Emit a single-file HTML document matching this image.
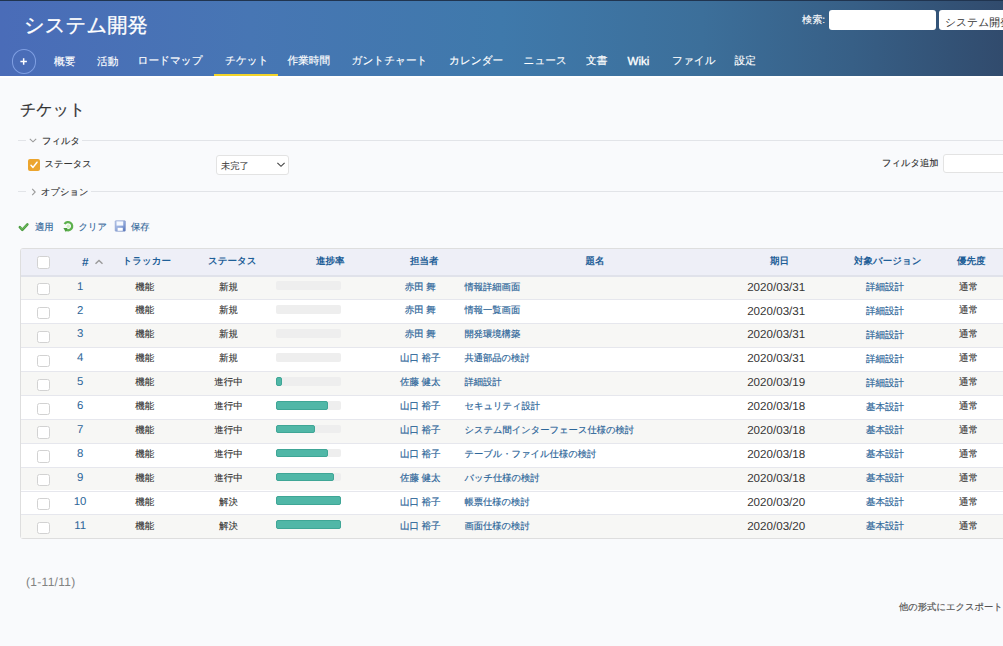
<!DOCTYPE html>
<html><head><meta charset="utf-8">
<style>
*{box-sizing:border-box}
html,body{margin:0;padding:0;width:1003px;height:646px;overflow:hidden;background:#f9fafc;font-family:"Liberation Sans",sans-serif;color:#333;text-rendering:geometricPrecision}
.a{position:absolute;white-space:nowrap;line-height:1}
.c{position:absolute;white-space:nowrap;line-height:1;text-align:center;width:200px}
.b{position:absolute}
</style></head><body>

<div class="b" style="left:0;top:0;width:1003px;height:76px;background:linear-gradient(90deg,#4a6cb8 0%,#4776b4 25%,#3f79ab 50%,#3c6f9a 70%,#375f86 85%,#314b6d 100%)"></div>
<div class="b" style="left:0;top:0;width:1003px;height:1.2px;background:#20344f"></div>
<div class="b" style="left:0;top:76.00px;width:1003px;height:1.5px;background:#fff"></div>
<div class="a" id="title" style="left:24.00px;top:16.00px;font-size:20.33px;color:#fff;letter-spacing:0px;-webkit-text-stroke:0.3px #fff;">システム開発</div>
<div class="a" id="kensaku" style="left:802.00px;top:15.50px;font-size:10.15px;color:#fff;letter-spacing:0px;-webkit-text-stroke:0.1px #fff;">検索:</div>
<div class="b" style="left:829px;top:10px;width:107px;height:20px;background:#fff;border-radius:3px"></div>
<div class="b" style="left:939px;top:10px;width:90px;height:20px;background:#fff;border-radius:3px"></div>
<div class="a" id="seltxt" style="left:945.00px;top:18.00px;font-size:10.80px;color:#333;letter-spacing:0px;-webkit-text-stroke:0px #333;">システム開発</div>
<div class="b" style="left:11.5px;top:48.8px;width:24.6px;height:24.8px;border:1.7px solid #7f9fe2;border-radius:50%"></div>
<svg class="b" style="left:13px;top:51px" width="22" height="22" viewBox="0 0 22 22"><path d="M7.4 10.5 H13.9 M10.65 7.3 V13.8" stroke="#fff" stroke-width="1.5"/></svg>
<div class="a" id="m0" style="left:54.00px;top:57.00px;font-size:10.65px;font-weight:normal;color:#fff;-webkit-text-stroke:0.15px #fff;">概要</div>
<div class="a" id="m1" style="left:97.00px;top:57.00px;font-size:10.65px;font-weight:normal;color:#fff;-webkit-text-stroke:0.15px #fff;">活動</div>
<div class="a" id="m2" style="left:137.50px;top:56.00px;font-size:10.65px;font-weight:normal;color:#fff;-webkit-text-stroke:0.15px #fff;">ロードマップ</div>
<div class="a" id="m3" style="left:225.00px;top:56.00px;font-size:10.65px;font-weight:normal;color:#fff;-webkit-text-stroke:0.15px #fff;">チケット</div>
<div class="a" id="m4" style="left:287.50px;top:56.00px;font-size:10.65px;font-weight:normal;color:#fff;-webkit-text-stroke:0.15px #fff;">作業時間</div>
<div class="a" id="m5" style="left:351.50px;top:56.00px;font-size:10.65px;font-weight:normal;color:#fff;-webkit-text-stroke:0.15px #fff;">ガントチャート</div>
<div class="a" id="m6" style="left:449.00px;top:56.00px;font-size:10.65px;font-weight:normal;color:#fff;-webkit-text-stroke:0.15px #fff;">カレンダー</div>
<div class="a" id="m7" style="left:523.50px;top:56.00px;font-size:10.65px;font-weight:normal;color:#fff;-webkit-text-stroke:0.15px #fff;">ニュース</div>
<div class="a" id="m8" style="left:586.00px;top:56.00px;font-size:10.65px;font-weight:normal;color:#fff;-webkit-text-stroke:0.15px #fff;">文書</div>
<div class="a" id="m9" style="left:627.50px;top:56.00px;font-size:11.60px;font-weight:normal;color:#fff;-webkit-text-stroke:0.35px #fff;">Wiki</div>
<div class="a" id="m10" style="left:672.00px;top:56.00px;font-size:10.65px;font-weight:normal;color:#fff;-webkit-text-stroke:0.15px #fff;">ファイル</div>
<div class="a" id="m11" style="left:734.50px;top:56.00px;font-size:10.65px;font-weight:normal;color:#fff;-webkit-text-stroke:0.15px #fff;">設定</div>
<div class="b" style="left:213.8px;top:73.8px;width:64.7px;height:2.4px;background:#f2d42a"></div>
<div class="a" id="h2" style="left:20.00px;top:103.00px;font-size:15.99px;color:#333;-webkit-text-stroke:0.2px #333;">チケット</div>
<div class="b" style="left:18px;top:140px;width:8px;height:1px;background:#e2e4e8"></div>
<div class="b" style="left:82px;top:140px;width:930px;height:1px;background:#e2e4e8"></div>
<div class="b" style="left:18px;top:191px;width:8px;height:1px;background:#e2e4e8"></div>
<div class="b" style="left:91px;top:191px;width:930px;height:1px;background:#e2e4e8"></div>
<svg class="b" style="left:28px;top:136px" width="10" height="8" viewBox="0 0 10 8"><path d="M1.8 2.8 L5 5.8 L8.2 2.8" fill="none" stroke="#9a9a9a" stroke-width="1.1"/></svg>
<svg class="b" style="left:29px;top:187px" width="10" height="10" viewBox="0 0 10 10"><path d="M3.2 1.8 L6.2 5 L3.2 8.2" fill="none" stroke="#9a9a9a" stroke-width="1.1"/></svg>
<div class="a" id="filt" style="left:42.00px;top:136.50px;font-size:9.30px;color:#333;letter-spacing:0px;-webkit-text-stroke:0.15px #333;">フィルタ</div>
<div class="a" id="opt" style="left:41.00px;top:187.80px;font-size:9.30px;color:#333;letter-spacing:0px;-webkit-text-stroke:0.15px #333;">オプション</div>
<div class="b" style="left:28px;top:159px;width:11.5px;height:11.5px;background:#eca52e;border-radius:2px"></div>
<svg class="b" style="left:28px;top:159px" width="12" height="12" viewBox="0 0 12 12"><path d="M3 6.2 L5 8.4 L9 3.2" fill="none" stroke="#fff" stroke-width="1.5" stroke-linecap="round" stroke-linejoin="round"/></svg>
<div class="a" id="stlab" style="left:44.50px;top:160.00px;font-size:9.30px;color:#333;letter-spacing:0px;-webkit-text-stroke:0.15px #333;">ステータス</div>
<div class="b" style="left:215.5px;top:155px;width:73.5px;height:19.5px;background:#fff;border:1px solid #e3e3e3;border-radius:3px"></div>
<div class="a" id="mikan" style="left:221.00px;top:161.50px;font-size:9.30px;color:#444;letter-spacing:0px;-webkit-text-stroke:0.1px #444;">未完了</div>
<svg class="b" style="left:275px;top:160px" width="12" height="9" viewBox="0 0 12 9"><path d="M2.4 2.8 L6 6.3 L9.6 2.8" fill="none" stroke="#444" stroke-width="1.15"/></svg>
<div class="a" id="filtadd" style="left:882.00px;top:159.00px;font-size:9.30px;color:#333;letter-spacing:0px;-webkit-text-stroke:0.15px #333;">フィルタ追加</div>
<div class="b" style="left:942.5px;top:154px;width:80px;height:18.5px;background:#fff;border:1px solid #e3e3e3;border-radius:3px"></div>
<svg class="b" style="left:14px;top:216px" width="20" height="20" viewBox="0 0 20 20"><path d="M5.8 11.2 L8.3 13.8 L13.4 8.4" fill="none" stroke="#4c9c40" stroke-width="2.5" stroke-linejoin="round" stroke-linecap="round"/><path d="M6.1 11.3 L8.3 13.4 L13.1 8.5" fill="none" stroke="#7cc96a" stroke-width="0.9" stroke-linejoin="round"/></svg>
<svg class="b" style="left:58px;top:216px" width="20" height="20" viewBox="0 0 20 20"><path d="M6.6 8.0 A4.1 4.1 0 1 1 7.3 13.2" fill="none" stroke="#5cb04c" stroke-width="2.3"/><path d="M5.4 11.9 L9.4 11.9 L8.0 16.3 Z" fill="#4a9d3d"/><circle cx="10.3" cy="10.2" r="1.7" fill="#d2f3c4"/></svg>
<svg class="b" style="left:110px;top:216px" width="20" height="20" viewBox="0 0 20 20"><defs><linearGradient id="fl" x1="0" y1="0" x2="1" y2="1"><stop offset="0" stop-color="#c3d2f0"/><stop offset="0.6" stop-color="#8aa3d8"/><stop offset="1" stop-color="#4f6fb5"/></linearGradient></defs><rect x="5.2" y="4.8" width="10.2" height="10.4" rx="0.6" fill="url(#fl)" stroke="#8196c8" stroke-width="0.6"/><rect x="6.6" y="5.4" width="6.6" height="4.2" fill="#f6f9ff"/><rect x="7.6" y="11.8" width="5.2" height="3" fill="#ffffff"/></svg>
<div class="a" id="tekiyo" style="left:35.00px;top:222.70px;font-size:9.30px;color:#33679a;letter-spacing:0px;-webkit-text-stroke:0.15px #33679a;">適用</div>
<div class="a" id="clear" style="left:78.50px;top:222.70px;font-size:9.30px;color:#33679a;letter-spacing:0px;-webkit-text-stroke:0.15px #33679a;">クリア</div>
<div class="a" id="hozon" style="left:131.00px;top:222.70px;font-size:9.30px;color:#33679a;letter-spacing:0px;-webkit-text-stroke:0.15px #33679a;">保存</div>
<div class="b" style="left:20px;top:248px;width:1000px;height:291.30px;border:1px solid #dedede;border-radius:3px;background:#fff"></div>
<div class="b" style="left:21px;top:249px;width:999px;height:26.00px;background:#eeeff7;border-radius:2px 0 0 0"></div>
<div class="b" style="left:21px;top:275.00px;width:999px;height:2.00px;background:#e0e2ea"></div>
<div class="b" style="left:21px;top:277.00px;width:999px;height:22.30px;background:#f7f7f5"></div>
<div class="b" style="left:21px;top:299.30px;width:999px;height:1px;background:#e6e7ed"></div>
<div class="b" style="left:21px;top:300.30px;width:999px;height:22.90px;background:#ffffff"></div>
<div class="b" style="left:21px;top:323.20px;width:999px;height:1px;background:#e6e7ed"></div>
<div class="b" style="left:21px;top:324.20px;width:999px;height:22.90px;background:#f7f7f5"></div>
<div class="b" style="left:21px;top:347.10px;width:999px;height:1px;background:#e6e7ed"></div>
<div class="b" style="left:21px;top:348.10px;width:999px;height:22.90px;background:#ffffff"></div>
<div class="b" style="left:21px;top:371.00px;width:999px;height:1px;background:#e6e7ed"></div>
<div class="b" style="left:21px;top:372.00px;width:999px;height:22.90px;background:#f7f7f5"></div>
<div class="b" style="left:21px;top:394.90px;width:999px;height:1px;background:#e6e7ed"></div>
<div class="b" style="left:21px;top:395.90px;width:999px;height:22.90px;background:#ffffff"></div>
<div class="b" style="left:21px;top:418.80px;width:999px;height:1px;background:#e6e7ed"></div>
<div class="b" style="left:21px;top:419.80px;width:999px;height:22.90px;background:#f7f7f5"></div>
<div class="b" style="left:21px;top:442.70px;width:999px;height:1px;background:#e6e7ed"></div>
<div class="b" style="left:21px;top:443.70px;width:999px;height:22.90px;background:#ffffff"></div>
<div class="b" style="left:21px;top:466.60px;width:999px;height:1px;background:#e6e7ed"></div>
<div class="b" style="left:21px;top:467.60px;width:999px;height:22.90px;background:#f7f7f5"></div>
<div class="b" style="left:21px;top:490.50px;width:999px;height:1px;background:#e6e7ed"></div>
<div class="b" style="left:21px;top:491.50px;width:999px;height:22.90px;background:#ffffff"></div>
<div class="b" style="left:21px;top:514.40px;width:999px;height:1px;background:#e6e7ed"></div>
<div class="b" style="left:21px;top:515.40px;width:999px;height:22.90px;background:#f7f7f5"></div>
<div class="b" style="left:36.9px;top:256.30px;width:12.8px;height:12.3px;background:#fff;border:1.1px solid #d2d2d2;border-radius:2.5px"></div>
<div class="a" id="hnum" style="left:82.00px;top:257.00px;font-size:11.80px;font-weight:bold;color:#1f5f98;">#</div>
<div class="a" id="htr" style="left:122.50px;top:257.20px;font-size:9.50px;font-weight:bold;color:#1f5f98;letter-spacing:0px;-webkit-text-stroke:0px #1f5f98;">トラッカー</div>
<div class="a" id="hst" style="left:208.00px;top:257.20px;font-size:9.50px;font-weight:bold;color:#1f5f98;letter-spacing:0px;-webkit-text-stroke:0px #1f5f98;">ステータス</div>
<div class="a" id="hpr" style="left:316.00px;top:256.60px;font-size:9.50px;font-weight:bold;color:#1f5f98;letter-spacing:0px;-webkit-text-stroke:0px #1f5f98;">進捗率</div>
<div class="a" id="has" style="left:410.00px;top:256.60px;font-size:9.50px;font-weight:bold;color:#1f5f98;letter-spacing:0px;-webkit-text-stroke:0px #1f5f98;">担当者</div>
<div class="a" id="hsub" style="left:585.50px;top:256.60px;font-size:9.50px;font-weight:bold;color:#1f5f98;letter-spacing:0px;-webkit-text-stroke:0px #1f5f98;">題名</div>
<div class="a" id="hdue" style="left:770.00px;top:256.60px;font-size:9.50px;font-weight:bold;color:#1f5f98;letter-spacing:0px;-webkit-text-stroke:0px #1f5f98;">期日</div>
<div class="a" id="hver" style="left:854.00px;top:256.60px;font-size:9.50px;font-weight:bold;color:#1f5f98;letter-spacing:0px;-webkit-text-stroke:0px #1f5f98;">対象バージョン</div>
<div class="a" id="hpri" style="left:957.00px;top:256.60px;font-size:9.50px;font-weight:bold;color:#1f5f98;letter-spacing:0px;-webkit-text-stroke:0px #1f5f98;">優先度</div>
<svg class="b" style="left:94px;top:258px" width="10" height="8" viewBox="0 0 10 8"><path d="M1.5 5.8 L5 2.4 L8.5 5.8" fill="none" stroke="#9a9a9a" stroke-width="1.4"/></svg>
<div class="b" style="left:36.9px;top:283.00px;width:12.8px;height:12.3px;background:#fff;border:1.1px solid #d2d2d2;border-radius:2.5px"></div>
<div class="c" style="left:-19.90px;top:281.60px;font-size:11.40px;letter-spacing:0px;color:#2d6699;-webkit-text-stroke:0px #2d6699">1</div>
<div class="c" style="left:44.80px;top:282.50px;font-size:9.50px;letter-spacing:0px;color:#333;-webkit-text-stroke:0.12px #333">機能</div>
<div class="c" style="left:128.60px;top:282.50px;font-size:9.50px;letter-spacing:0px;color:#333;-webkit-text-stroke:0.12px #333">新規</div>
<div class="c" style="left:320.30px;top:282.50px;font-size:9.50px;letter-spacing:0px;color:#2d6699;-webkit-text-stroke:0.18px #2d6699">赤田 舞</div>
<div class="a" style="left:464.40px;top:282.50px;font-size:9.30px;letter-spacing:0px;color:#2d6699;-webkit-text-stroke:0.18px #2d6699">情報詳細画面</div>
<div class="c" style="left:676.20px;top:281.60px;font-size:11.60px;letter-spacing:0px;color:#333;-webkit-text-stroke:0px #333">2020/03/31</div>
<div class="c" style="left:785.00px;top:283.00px;font-size:9.50px;letter-spacing:0px;color:#2d6699;-webkit-text-stroke:0.18px #2d6699">詳細設計</div>
<div class="c" style="left:868.60px;top:282.50px;font-size:9.50px;letter-spacing:0px;color:#333;-webkit-text-stroke:0.12px #333">通常</div>
<div class="b" style="left:275.5px;top:281.30px;width:65.3px;height:8.8px;background:#eeeeee;border-radius:2px"></div>
<div class="b" style="left:36.9px;top:306.90px;width:12.8px;height:12.3px;background:#fff;border:1.1px solid #d2d2d2;border-radius:2.5px"></div>
<div class="c" style="left:-19.90px;top:305.50px;font-size:11.40px;letter-spacing:0px;color:#2d6699;-webkit-text-stroke:0px #2d6699">2</div>
<div class="c" style="left:44.80px;top:306.40px;font-size:9.50px;letter-spacing:0px;color:#333;-webkit-text-stroke:0.12px #333">機能</div>
<div class="c" style="left:128.60px;top:306.40px;font-size:9.50px;letter-spacing:0px;color:#333;-webkit-text-stroke:0.12px #333">新規</div>
<div class="c" style="left:320.30px;top:306.40px;font-size:9.50px;letter-spacing:0px;color:#2d6699;-webkit-text-stroke:0.18px #2d6699">赤田 舞</div>
<div class="a" style="left:464.40px;top:306.40px;font-size:9.30px;letter-spacing:0px;color:#2d6699;-webkit-text-stroke:0.18px #2d6699">情報一覧画面</div>
<div class="c" style="left:676.20px;top:305.50px;font-size:11.60px;letter-spacing:0px;color:#333;-webkit-text-stroke:0px #333">2020/03/31</div>
<div class="c" style="left:785.00px;top:306.90px;font-size:9.50px;letter-spacing:0px;color:#2d6699;-webkit-text-stroke:0.18px #2d6699">詳細設計</div>
<div class="c" style="left:868.60px;top:306.40px;font-size:9.50px;letter-spacing:0px;color:#333;-webkit-text-stroke:0.12px #333">通常</div>
<div class="b" style="left:275.5px;top:305.20px;width:65.3px;height:8.8px;background:#eeeeee;border-radius:2px"></div>
<div class="b" style="left:36.9px;top:330.80px;width:12.8px;height:12.3px;background:#fff;border:1.1px solid #d2d2d2;border-radius:2.5px"></div>
<div class="c" style="left:-19.90px;top:329.40px;font-size:11.40px;letter-spacing:0px;color:#2d6699;-webkit-text-stroke:0px #2d6699">3</div>
<div class="c" style="left:44.80px;top:330.30px;font-size:9.50px;letter-spacing:0px;color:#333;-webkit-text-stroke:0.12px #333">機能</div>
<div class="c" style="left:128.60px;top:330.30px;font-size:9.50px;letter-spacing:0px;color:#333;-webkit-text-stroke:0.12px #333">新規</div>
<div class="c" style="left:320.30px;top:330.30px;font-size:9.50px;letter-spacing:0px;color:#2d6699;-webkit-text-stroke:0.18px #2d6699">赤田 舞</div>
<div class="a" style="left:464.40px;top:330.30px;font-size:9.30px;letter-spacing:0px;color:#2d6699;-webkit-text-stroke:0.18px #2d6699">開発環境構築</div>
<div class="c" style="left:676.20px;top:329.40px;font-size:11.60px;letter-spacing:0px;color:#333;-webkit-text-stroke:0px #333">2020/03/31</div>
<div class="c" style="left:785.00px;top:330.80px;font-size:9.50px;letter-spacing:0px;color:#2d6699;-webkit-text-stroke:0.18px #2d6699">詳細設計</div>
<div class="c" style="left:868.60px;top:330.30px;font-size:9.50px;letter-spacing:0px;color:#333;-webkit-text-stroke:0.12px #333">通常</div>
<div class="b" style="left:275.5px;top:329.10px;width:65.3px;height:8.8px;background:#eeeeee;border-radius:2px"></div>
<div class="b" style="left:36.9px;top:354.70px;width:12.8px;height:12.3px;background:#fff;border:1.1px solid #d2d2d2;border-radius:2.5px"></div>
<div class="c" style="left:-19.90px;top:353.30px;font-size:11.40px;letter-spacing:0px;color:#2d6699;-webkit-text-stroke:0px #2d6699">4</div>
<div class="c" style="left:44.80px;top:354.20px;font-size:9.50px;letter-spacing:0px;color:#333;-webkit-text-stroke:0.12px #333">機能</div>
<div class="c" style="left:128.60px;top:354.20px;font-size:9.50px;letter-spacing:0px;color:#333;-webkit-text-stroke:0.12px #333">新規</div>
<div class="c" style="left:320.30px;top:354.20px;font-size:9.50px;letter-spacing:0px;color:#2d6699;-webkit-text-stroke:0.18px #2d6699">山口 裕子</div>
<div class="a" style="left:464.40px;top:354.20px;font-size:9.30px;letter-spacing:0px;color:#2d6699;-webkit-text-stroke:0.18px #2d6699">共通部品の検討</div>
<div class="c" style="left:676.20px;top:353.30px;font-size:11.60px;letter-spacing:0px;color:#333;-webkit-text-stroke:0px #333">2020/03/31</div>
<div class="c" style="left:785.00px;top:354.70px;font-size:9.50px;letter-spacing:0px;color:#2d6699;-webkit-text-stroke:0.18px #2d6699">詳細設計</div>
<div class="c" style="left:868.60px;top:354.20px;font-size:9.50px;letter-spacing:0px;color:#333;-webkit-text-stroke:0.12px #333">通常</div>
<div class="b" style="left:275.5px;top:353.00px;width:65.3px;height:8.8px;background:#eeeeee;border-radius:2px"></div>
<div class="b" style="left:36.9px;top:378.60px;width:12.8px;height:12.3px;background:#fff;border:1.1px solid #d2d2d2;border-radius:2.5px"></div>
<div class="c" style="left:-19.90px;top:377.20px;font-size:11.40px;letter-spacing:0px;color:#2d6699;-webkit-text-stroke:0px #2d6699">5</div>
<div class="c" style="left:44.80px;top:378.10px;font-size:9.50px;letter-spacing:0px;color:#333;-webkit-text-stroke:0.12px #333">機能</div>
<div class="c" style="left:128.60px;top:378.10px;font-size:9.50px;letter-spacing:0px;color:#333;-webkit-text-stroke:0.12px #333">進行中</div>
<div class="c" style="left:320.30px;top:378.10px;font-size:9.50px;letter-spacing:0px;color:#2d6699;-webkit-text-stroke:0.18px #2d6699">佐藤 健太</div>
<div class="a" style="left:464.40px;top:378.10px;font-size:9.30px;letter-spacing:0px;color:#2d6699;-webkit-text-stroke:0.18px #2d6699">詳細設計</div>
<div class="c" style="left:676.20px;top:377.20px;font-size:11.60px;letter-spacing:0px;color:#333;-webkit-text-stroke:0px #333">2020/03/19</div>
<div class="c" style="left:785.00px;top:378.60px;font-size:9.50px;letter-spacing:0px;color:#2d6699;-webkit-text-stroke:0.18px #2d6699">詳細設計</div>
<div class="c" style="left:868.60px;top:378.10px;font-size:9.50px;letter-spacing:0px;color:#333;-webkit-text-stroke:0.12px #333">通常</div>
<div class="b" style="left:275.5px;top:376.90px;width:65.3px;height:8.8px;background:#eeeeee;border-radius:2px"></div>
<div class="b" style="left:275.5px;top:376.90px;width:6.53px;height:8.8px;background:#50b7a7;border:1px solid #3fa696;border-radius:2px"></div>
<div class="b" style="left:36.9px;top:402.50px;width:12.8px;height:12.3px;background:#fff;border:1.1px solid #d2d2d2;border-radius:2.5px"></div>
<div class="c" style="left:-19.90px;top:401.10px;font-size:11.40px;letter-spacing:0px;color:#2d6699;-webkit-text-stroke:0px #2d6699">6</div>
<div class="c" style="left:44.80px;top:402.00px;font-size:9.50px;letter-spacing:0px;color:#333;-webkit-text-stroke:0.12px #333">機能</div>
<div class="c" style="left:128.60px;top:402.00px;font-size:9.50px;letter-spacing:0px;color:#333;-webkit-text-stroke:0.12px #333">進行中</div>
<div class="c" style="left:320.30px;top:402.00px;font-size:9.50px;letter-spacing:0px;color:#2d6699;-webkit-text-stroke:0.18px #2d6699">山口 裕子</div>
<div class="a" style="left:464.40px;top:402.00px;font-size:9.30px;letter-spacing:0px;color:#2d6699;-webkit-text-stroke:0.18px #2d6699">セキュリティ設計</div>
<div class="c" style="left:676.20px;top:401.10px;font-size:11.60px;letter-spacing:0px;color:#333;-webkit-text-stroke:0px #333">2020/03/18</div>
<div class="c" style="left:785.00px;top:402.50px;font-size:9.50px;letter-spacing:0px;color:#2d6699;-webkit-text-stroke:0.18px #2d6699">基本設計</div>
<div class="c" style="left:868.60px;top:402.00px;font-size:9.50px;letter-spacing:0px;color:#333;-webkit-text-stroke:0.12px #333">通常</div>
<div class="b" style="left:275.5px;top:400.80px;width:65.3px;height:8.8px;background:#eeeeee;border-radius:2px"></div>
<div class="b" style="left:275.5px;top:400.80px;width:52.24px;height:8.8px;background:#50b7a7;border:1px solid #3fa696;border-radius:2px"></div>
<div class="b" style="left:36.9px;top:426.40px;width:12.8px;height:12.3px;background:#fff;border:1.1px solid #d2d2d2;border-radius:2.5px"></div>
<div class="c" style="left:-19.90px;top:425.00px;font-size:11.40px;letter-spacing:0px;color:#2d6699;-webkit-text-stroke:0px #2d6699">7</div>
<div class="c" style="left:44.80px;top:425.90px;font-size:9.50px;letter-spacing:0px;color:#333;-webkit-text-stroke:0.12px #333">機能</div>
<div class="c" style="left:128.60px;top:425.90px;font-size:9.50px;letter-spacing:0px;color:#333;-webkit-text-stroke:0.12px #333">進行中</div>
<div class="c" style="left:320.30px;top:425.90px;font-size:9.50px;letter-spacing:0px;color:#2d6699;-webkit-text-stroke:0.18px #2d6699">山口 裕子</div>
<div class="a" style="left:464.40px;top:425.90px;font-size:9.30px;letter-spacing:0px;color:#2d6699;-webkit-text-stroke:0.18px #2d6699">システム間インターフェース仕様の検討</div>
<div class="c" style="left:676.20px;top:425.00px;font-size:11.60px;letter-spacing:0px;color:#333;-webkit-text-stroke:0px #333">2020/03/18</div>
<div class="c" style="left:785.00px;top:426.40px;font-size:9.50px;letter-spacing:0px;color:#2d6699;-webkit-text-stroke:0.18px #2d6699">基本設計</div>
<div class="c" style="left:868.60px;top:425.90px;font-size:9.50px;letter-spacing:0px;color:#333;-webkit-text-stroke:0.12px #333">通常</div>
<div class="b" style="left:275.5px;top:424.70px;width:65.3px;height:8.8px;background:#eeeeee;border-radius:2px"></div>
<div class="b" style="left:275.5px;top:424.70px;width:39.18px;height:8.8px;background:#50b7a7;border:1px solid #3fa696;border-radius:2px"></div>
<div class="b" style="left:36.9px;top:450.30px;width:12.8px;height:12.3px;background:#fff;border:1.1px solid #d2d2d2;border-radius:2.5px"></div>
<div class="c" style="left:-19.90px;top:448.90px;font-size:11.40px;letter-spacing:0px;color:#2d6699;-webkit-text-stroke:0px #2d6699">8</div>
<div class="c" style="left:44.80px;top:449.80px;font-size:9.50px;letter-spacing:0px;color:#333;-webkit-text-stroke:0.12px #333">機能</div>
<div class="c" style="left:128.60px;top:449.80px;font-size:9.50px;letter-spacing:0px;color:#333;-webkit-text-stroke:0.12px #333">進行中</div>
<div class="c" style="left:320.30px;top:449.80px;font-size:9.50px;letter-spacing:0px;color:#2d6699;-webkit-text-stroke:0.18px #2d6699">山口 裕子</div>
<div class="a" style="left:464.40px;top:449.80px;font-size:9.30px;letter-spacing:0px;color:#2d6699;-webkit-text-stroke:0.18px #2d6699">テーブル・ファイル仕様の検討</div>
<div class="c" style="left:676.20px;top:448.90px;font-size:11.60px;letter-spacing:0px;color:#333;-webkit-text-stroke:0px #333">2020/03/18</div>
<div class="c" style="left:785.00px;top:450.30px;font-size:9.50px;letter-spacing:0px;color:#2d6699;-webkit-text-stroke:0.18px #2d6699">基本設計</div>
<div class="c" style="left:868.60px;top:449.80px;font-size:9.50px;letter-spacing:0px;color:#333;-webkit-text-stroke:0.12px #333">通常</div>
<div class="b" style="left:275.5px;top:448.60px;width:65.3px;height:8.8px;background:#eeeeee;border-radius:2px"></div>
<div class="b" style="left:275.5px;top:448.60px;width:52.24px;height:8.8px;background:#50b7a7;border:1px solid #3fa696;border-radius:2px"></div>
<div class="b" style="left:36.9px;top:474.20px;width:12.8px;height:12.3px;background:#fff;border:1.1px solid #d2d2d2;border-radius:2.5px"></div>
<div class="c" style="left:-19.90px;top:472.80px;font-size:11.40px;letter-spacing:0px;color:#2d6699;-webkit-text-stroke:0px #2d6699">9</div>
<div class="c" style="left:44.80px;top:473.70px;font-size:9.50px;letter-spacing:0px;color:#333;-webkit-text-stroke:0.12px #333">機能</div>
<div class="c" style="left:128.60px;top:473.70px;font-size:9.50px;letter-spacing:0px;color:#333;-webkit-text-stroke:0.12px #333">進行中</div>
<div class="c" style="left:320.30px;top:473.70px;font-size:9.50px;letter-spacing:0px;color:#2d6699;-webkit-text-stroke:0.18px #2d6699">佐藤 健太</div>
<div class="a" style="left:464.40px;top:473.70px;font-size:9.30px;letter-spacing:0px;color:#2d6699;-webkit-text-stroke:0.18px #2d6699">バッチ仕様の検討</div>
<div class="c" style="left:676.20px;top:472.80px;font-size:11.60px;letter-spacing:0px;color:#333;-webkit-text-stroke:0px #333">2020/03/18</div>
<div class="c" style="left:785.00px;top:474.20px;font-size:9.50px;letter-spacing:0px;color:#2d6699;-webkit-text-stroke:0.18px #2d6699">基本設計</div>
<div class="c" style="left:868.60px;top:473.70px;font-size:9.50px;letter-spacing:0px;color:#333;-webkit-text-stroke:0.12px #333">通常</div>
<div class="b" style="left:275.5px;top:472.50px;width:65.3px;height:8.8px;background:#eeeeee;border-radius:2px"></div>
<div class="b" style="left:275.5px;top:472.50px;width:58.77px;height:8.8px;background:#50b7a7;border:1px solid #3fa696;border-radius:2px"></div>
<div class="b" style="left:36.9px;top:498.10px;width:12.8px;height:12.3px;background:#fff;border:1.1px solid #d2d2d2;border-radius:2.5px"></div>
<div class="c" style="left:-19.90px;top:496.70px;font-size:11.40px;letter-spacing:0px;color:#2d6699;-webkit-text-stroke:0px #2d6699">10</div>
<div class="c" style="left:44.80px;top:497.60px;font-size:9.50px;letter-spacing:0px;color:#333;-webkit-text-stroke:0.12px #333">機能</div>
<div class="c" style="left:128.60px;top:497.60px;font-size:9.50px;letter-spacing:0px;color:#333;-webkit-text-stroke:0.12px #333">解決</div>
<div class="c" style="left:320.30px;top:497.60px;font-size:9.50px;letter-spacing:0px;color:#2d6699;-webkit-text-stroke:0.18px #2d6699">山口 裕子</div>
<div class="a" style="left:464.40px;top:497.60px;font-size:9.30px;letter-spacing:0px;color:#2d6699;-webkit-text-stroke:0.18px #2d6699">帳票仕様の検討</div>
<div class="c" style="left:676.20px;top:496.70px;font-size:11.60px;letter-spacing:0px;color:#333;-webkit-text-stroke:0px #333">2020/03/20</div>
<div class="c" style="left:785.00px;top:498.10px;font-size:9.50px;letter-spacing:0px;color:#2d6699;-webkit-text-stroke:0.18px #2d6699">基本設計</div>
<div class="c" style="left:868.60px;top:497.60px;font-size:9.50px;letter-spacing:0px;color:#333;-webkit-text-stroke:0.12px #333">通常</div>
<div class="b" style="left:275.5px;top:496.40px;width:65.3px;height:8.8px;background:#eeeeee;border-radius:2px"></div>
<div class="b" style="left:275.5px;top:496.40px;width:65.30px;height:8.8px;background:#50b7a7;border:1px solid #3fa696;border-radius:2px"></div>
<div class="b" style="left:36.9px;top:522.00px;width:12.8px;height:12.3px;background:#fff;border:1.1px solid #d2d2d2;border-radius:2.5px"></div>
<div class="c" style="left:-19.90px;top:520.60px;font-size:11.40px;letter-spacing:0px;color:#2d6699;-webkit-text-stroke:0px #2d6699">11</div>
<div class="c" style="left:44.80px;top:521.50px;font-size:9.50px;letter-spacing:0px;color:#333;-webkit-text-stroke:0.12px #333">機能</div>
<div class="c" style="left:128.60px;top:521.50px;font-size:9.50px;letter-spacing:0px;color:#333;-webkit-text-stroke:0.12px #333">解決</div>
<div class="c" style="left:320.30px;top:521.50px;font-size:9.50px;letter-spacing:0px;color:#2d6699;-webkit-text-stroke:0.18px #2d6699">山口 裕子</div>
<div class="a" style="left:464.40px;top:521.50px;font-size:9.30px;letter-spacing:0px;color:#2d6699;-webkit-text-stroke:0.18px #2d6699">画面仕様の検討</div>
<div class="c" style="left:676.20px;top:520.60px;font-size:11.60px;letter-spacing:0px;color:#333;-webkit-text-stroke:0px #333">2020/03/20</div>
<div class="c" style="left:785.00px;top:522.00px;font-size:9.50px;letter-spacing:0px;color:#2d6699;-webkit-text-stroke:0.18px #2d6699">基本設計</div>
<div class="c" style="left:868.60px;top:521.50px;font-size:9.50px;letter-spacing:0px;color:#333;-webkit-text-stroke:0.12px #333">通常</div>
<div class="b" style="left:275.5px;top:520.30px;width:65.3px;height:8.8px;background:#eeeeee;border-radius:2px"></div>
<div class="b" style="left:275.5px;top:520.30px;width:65.30px;height:8.8px;background:#50b7a7;border:1px solid #3fa696;border-radius:2px"></div>
<div class="a" id="count" style="left:26.00px;top:575.50px;font-size:12.00px;color:#828282;letter-spacing:0.3px;">(1-11/11)</div>
<div class="a" id="export" style="left:899.00px;top:602.50px;font-size:9.30px;color:#555;letter-spacing:0px;-webkit-text-stroke:0.2px #555;">他の形式にエクスポート</div>
</body></html>
